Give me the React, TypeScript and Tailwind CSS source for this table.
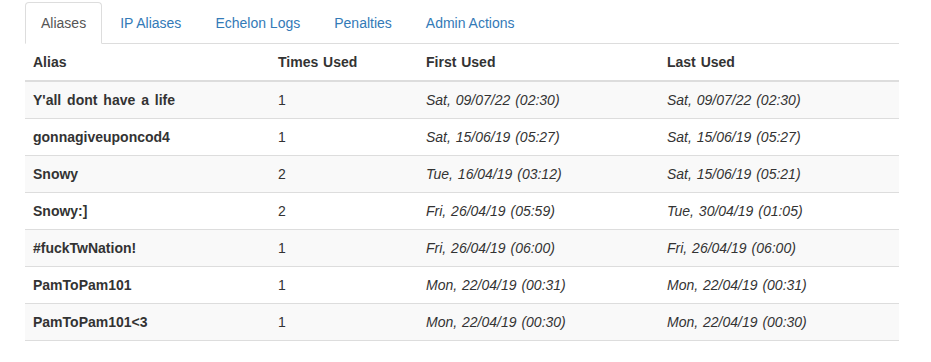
import React from "react";

const rows = [
  ["Y'all dont have a life", "1", "Sat, 09/07/22 (02:30)", "Sat, 09/07/22 (02:30)"],
  ["gonnagiveuponcod4", "1", "Sat, 15/06/19 (05:27)", "Sat, 15/06/19 (05:27)"],
  ["Snowy", "2", "Tue, 16/04/19 (03:12)", "Sat, 15/06/19 (05:21)"],
  ["Snowy:]", "2", "Fri, 26/04/19 (05:59)", "Tue, 30/04/19 (01:05)"],
  ["#fuckTwNation!", "1", "Fri, 26/04/19 (06:00)", "Fri, 26/04/19 (06:00)"],
  ["PamToPam101", "1", "Mon, 22/04/19 (00:31)", "Mon, 22/04/19 (00:31)"],
  ["PamToPam101<3", "1", "Mon, 22/04/19 (00:30)", "Mon, 22/04/19 (00:30)"],
];

const tabs = ["Aliases", "IP Aliases", "Echelon Logs", "Penalties", "Admin Actions"];

export default function App() {
  return (
    <div
      className="w-[931px] h-[362px] bg-white text-[#333] text-[14px] leading-[20px]"
      style={{ fontFamily: '"Liberation Sans", Arial, sans-serif' }}
    >
      <div className="ml-[25px] w-[874px] pt-[2px]">
        <ul className="flex border-b border-[#ddd]">
          {tabs.map((t, i) => (
            <li key={t} className="mr-[2px] -mb-px">
              {i === 0 ? (
                <span className="block px-[15px] py-[10px] border border-[#ddd] border-b-white rounded-t-[4px] bg-white text-[#555]">
                  {t}
                </span>
              ) : (
                <span className="block px-[15px] py-[10px] border border-transparent text-[#337ab7]">
                  {t}
                </span>
              )}
            </li>
          ))}
        </ul>
        <table className="w-[874px] border-collapse table-fixed">
          <colgroup>
            <col className="w-[245px]" />
            <col className="w-[148px]" />
            <col className="w-[241px]" />
            <col className="w-[240px]" />
          </colgroup>
          <thead>
            <tr>
              {["Alias", "Times Used", "First Used", "Last Used"].map((h) => (
                <th key={h} className="text-left font-bold p-[8px] border-b-2 border-[#ddd] [word-spacing:1px]">
                  {h}
                </th>
              ))}
            </tr>
          </thead>
          <tbody>
            {rows.map((r, i) => (
              <tr key={i} className={i % 2 === 0 ? "bg-[#f9f9f9]" : "bg-white"}>
                <td className="p-[8px] border-t border-b border-[#ddd] font-bold whitespace-nowrap [word-spacing:2px]">{r[0]}</td>
                <td className="p-[8px] border-t border-b border-[#ddd]">{r[1]}</td>
                <td className="p-[8px] border-t border-b border-[#ddd] italic [word-spacing:1px]">{r[2]}</td>
                <td className="p-[8px] border-t border-b border-[#ddd] italic [word-spacing:1px]">{r[3]}</td>
              </tr>
            ))}
          </tbody>
        </table>
      </div>
    </div>
  );
}
